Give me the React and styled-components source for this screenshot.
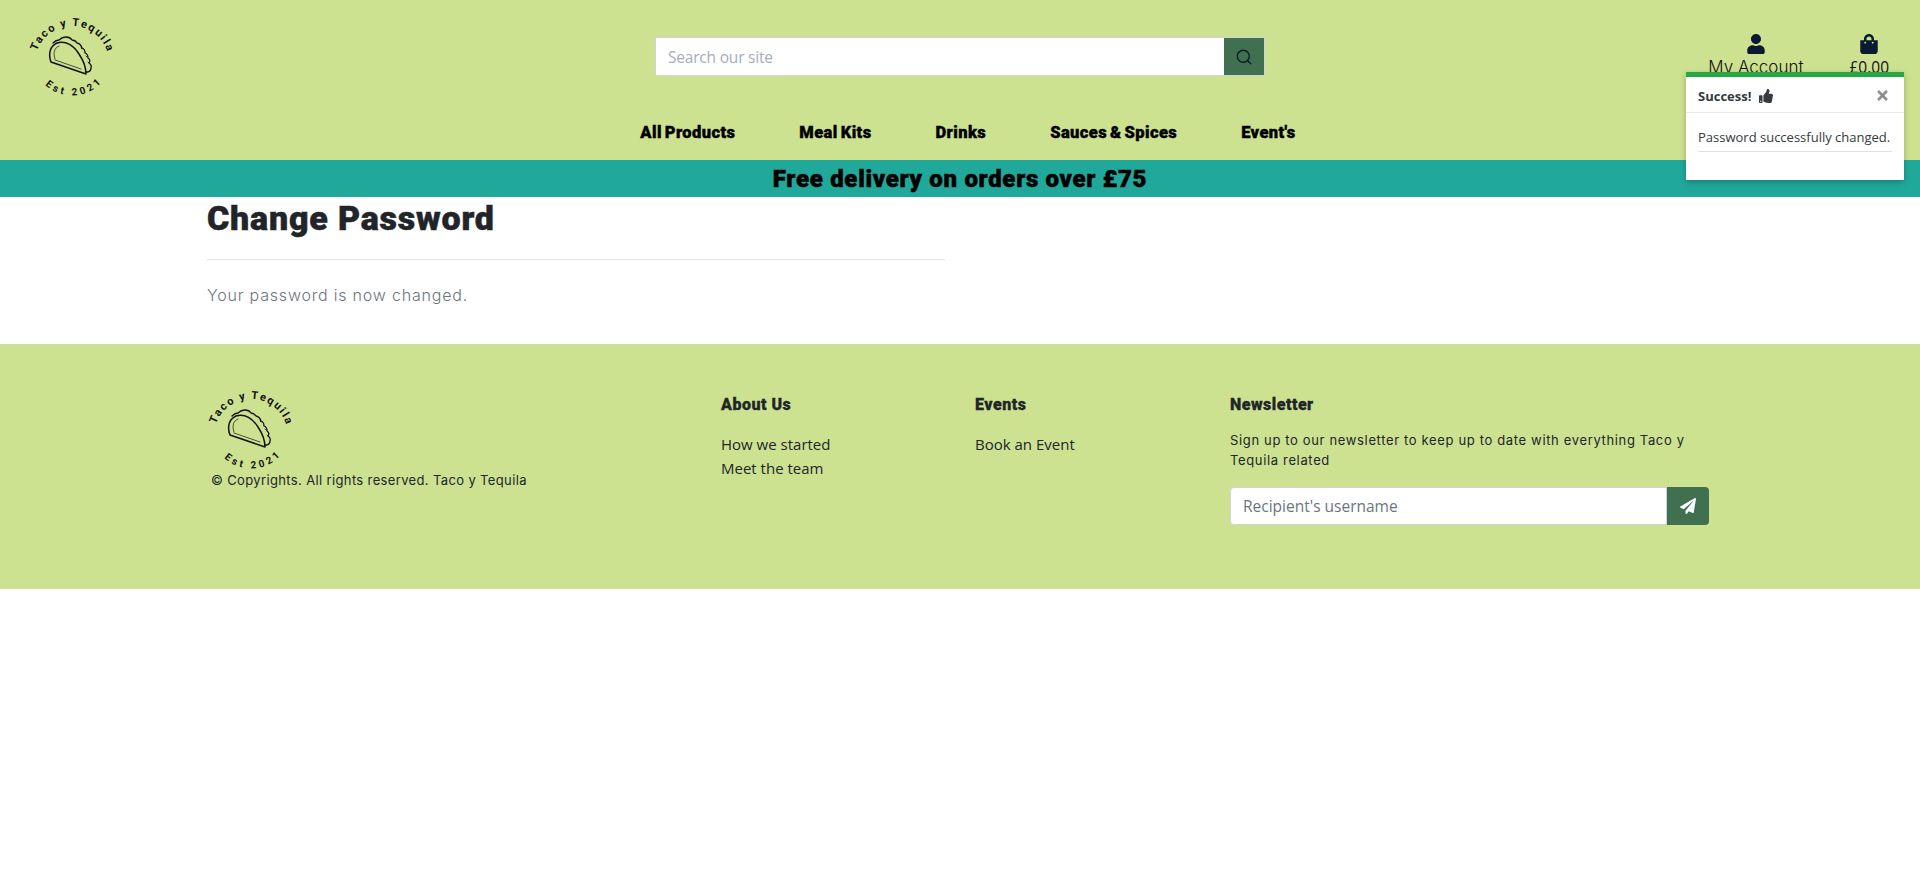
import React from 'react';
import styled, { createGlobalStyle } from 'styled-components';
import { FaUser, FaShoppingBag, FaThumbsUp, FaPaperPlane, FaTimes } from 'react-icons/fa';
import { Search } from 'lucide-react';

const GlobalStyle = createGlobalStyle`
  html, body { margin: 0; padding: 0; background: #fff; }
  body { font-family: "Open Sans", "Liberation Sans", sans-serif; color: #212529; }
  * { box-sizing: border-box; }
`;

const HEAVY = `"Roboto", "Lato", sans-serif`;
const ROUND = `"Inter", "Lato", sans-serif`;
const LIME = '#cde291';
const GREEN = '#40704f';

const Header = styled.header`
  position: relative;
  background: ${LIME};
  height: 160px;
`;

const TopRow = styled.div`
  display: grid;
  grid-template-columns: 1fr 610px 1fr;
  height: 112px;
  padding: 0 26px;
`;

const LogoCell = styled.div`
  padding-top: 8px;
`;

const SearchCell = styled.form`
  display: flex;
  height: 39px;
  margin-top: 37px;
  border: 1px solid #ced4da;
`;

const SearchInput = styled.input`
  flex: 1;
  border: 0;
  outline: 0;
  padding: 0 12px;
  font: 15.5px "Open Sans", sans-serif;
  letter-spacing: -0.2px;
  color: #495057;
  &::placeholder { color: #a6adb8; }
`;

const SearchButton = styled.button`
  width: 40px;
  border: 0;
  padding: 0;
  background: ${GREEN};
  color: #0b1a2b;
  display: flex;
  align-items: center;
  justify-content: center;
`;

const AccountCell = styled.div`
  display: flex;
  justify-content: flex-end;
  gap: 46px;
  padding: 34px 5px 0 0;
`;

const AccountLink = styled.a`
  display: flex;
  flex-direction: column;
  align-items: center;
  color: #111;
  font: ${(p) => (p.$price ? `400 15.5px/24px "Open Sans"` : `300 17px/24px ${ROUND}`)}, sans-serif;
  svg { color: #0b1a33; font-size: 20px; margin-bottom: 1px; }
`;

const Nav = styled.nav`
  display: flex;
  justify-content: center;
  gap: 64px;
  height: 48px;
  padding: 9px 0 0 16px;
`;

const NavItem = styled.a`
  color: #000;
  font: 900 16.5px/24px ${HEAVY};
  -webkit-text-stroke: 0.4px #000;
  letter-spacing: 0.4px;
  word-spacing: -1.5px;
`;

const Banner = styled.div`
  background: #20a89a;
  height: 37px;
  overflow: hidden;
  text-align: center;
  color: #000;
  font: 900 24px/39px ${HEAVY};
  -webkit-text-stroke: 0.5px #000;
  letter-spacing: 0.7px;
`;

const Toast = styled.div`
  position: absolute;
  top: 72px;
  right: 16px;
  width: 218px;
  height: 108px;
  background: #fff;
  border-top: 5px solid #28a745;
  box-shadow: 0 2px 6px rgba(0, 0, 0, 0.25);
  z-index: 5;
`;

const ToastHead = styled.div`
  display: flex;
  align-items: center;
  height: 36px;
  padding: 2px 12px 0;
  border-bottom: 1px solid #e9ecef;
  color: #343a40;
  font: 700 13px "Open Sans", sans-serif;
`;

const ThumbIcon = styled(FaThumbsUp)`
  margin-left: 8px;
  font-size: 14px;
`;

const CloseIcon = styled(FaTimes)`
  margin-left: auto;
  margin-right: 2px;
  color: #8f8f8f;
  font-size: 15px;
`;

const ToastBody = styled.div`
  margin: 0 12px;
  padding-top: 15px;
  height: 39px;
  border-bottom: 1px solid #dee2e6;
  color: #343a40;
  font: 400 13px/18px "Open Sans", sans-serif;
  white-space: nowrap;
`;

const Main = styled.main`
  width: 1506px;
  margin: 0 auto;
  height: 147px;
`;

const PageColumn = styled.div`
  width: 738px;
`;

const Title = styled.h1`
  margin: 0;
  height: 63px;
  padding-top: 1px;
  border-bottom: 1px solid #e1e3e5;
  font: 900 34px/40px ${HEAVY};
  -webkit-text-stroke: 0.5px #212529;
  letter-spacing: 0.8px;
  color: #212529;
`;

const Lead = styled.p`
  margin: 0;
  padding-top: 23px;
  color: #6c757d;
  font: 300 16px/24px ${ROUND};
  letter-spacing: 0.8px;
`;

const Footer = styled.footer`
  background: ${LIME};
  height: 245px;
`;

const FooterGrid = styled.div`
  width: 1506px;
  margin: 0 auto;
  padding-top: 50px;
  display: grid;
  grid-template-columns: 514px 254px 255px 483px;
`;

const Brand = styled.div`
  margin: -13px 0 0 -2px;
`;

const Copyright = styled.p`
  margin: -1px 0 0 6px;
  color: #212529;
  font: 400 13px/20px ${ROUND};
  letter-spacing: 0.36px;
`;

const ColTitle = styled.h5`
  margin: 1px 0 17px;
  color: #212529;
  font: 900 16px/20px ${HEAVY};
  -webkit-text-stroke: 0.3px #212529;
  letter-spacing: 0.5px;
`;

const FootLink = styled.a`
  display: block;
  color: #212529;
  font: 400 15px/24px "Open Sans", sans-serif;
`;

const NewsText = styled.p`
  margin: -2px 0 17px;
  width: 472px;
  color: #212529;
  font: 400 13px/20px ${ROUND};
  letter-spacing: 0.65px;
`;

const NewsForm = styled.form`
  display: flex;
  width: 479px;
  height: 38px;
`;

const NewsInput = styled.input`
  flex: 1;
  min-width: 0;
  padding: 0 12px;
  border: 1px solid #ced4da;
  border-radius: 4px 0 0 4px;
  outline: 0;
  font: 15.5px "Open Sans", sans-serif;
  &::placeholder { color: #6c757d; }
`;

const NewsButton = styled.button`
  width: 42px;
  border: 0;
  padding: 0;
  border-radius: 0 4px 4px 0;
  background: ${GREEN};
  color: #fff;
  display: flex;
  align-items: center;
  justify-content: center;
  font-size: 16px;
`;

const LogoSvg = styled.svg`
  display: block;
  overflow: visible;
`;

const LogoText = styled.text`
  font-family: "Roboto", sans-serif;
  font-weight: 700;
  fill: #111;
`;

// round stamp logo, a taco with text on two arcs
const Logo = ({ id }) => (
  <LogoSvg width="90" height="90" viewBox="0 0 90 90" fill="none">
    <defs>
      <path id={`${id}-top`} d="M11 43 A37 37 0 0 1 81 43" />
      <path id={`${id}-bot`} d="M19 77 A40 40 0 0 0 76 74" />
    </defs>
    <LogoText fontSize="11">
      <textPath href={`#${id}-top`} textLength="92" lengthAdjust="spacing">Taco y Tequila</textPath>
    </LogoText>
    <LogoText fontSize="10">
      <textPath href={`#${id}-bot`} textLength="62" lengthAdjust="spacing">Est  2021</textPath>
    </LogoText>
    <g stroke="#111" strokeLinecap="round" strokeLinejoin="round">
      <path strokeWidth="1.3" d="M27 35 q3 -3 6 -3 q3 -3 7 -3 q4 0 6 3 q3 0 5 3 q4 1 5 5 q3 1 3 5 q3 1 3 5 q3 2 1 5 q3 2 2 5 q0 3 -3 4 l-2 0" />
      <path strokeWidth="1.5" d="M25 54 C22 46 24 38 31 35 C40 32 48 38 53 46 C57 52 60 60 60 66 Z" />
      <path strokeWidth="0.7" d="M29 51 C27 45 28 40 33 38 M29 52 L55 61" />
      <path strokeWidth="0.8" d="M55 40 l1 1 M60 48 l1 1 M62 54 l1 1" />
    </g>
  </LogoSvg>
);

const App = () => (
  <>
    <GlobalStyle />
    <Header>
      <TopRow>
        <LogoCell><Logo id="head" /></LogoCell>
        <SearchCell>
          <SearchInput placeholder="Search our site" />
          <SearchButton type="button"><Search size={18} strokeWidth={1.8} /></SearchButton>
        </SearchCell>
        <AccountCell>
          <AccountLink><FaUser />My Account</AccountLink>
          <AccountLink $price><FaShoppingBag />£0.00</AccountLink>
        </AccountCell>
      </TopRow>
      <Nav>
        <NavItem>All Products</NavItem>
        <NavItem>Meal Kits</NavItem>
        <NavItem>Drinks</NavItem>
        <NavItem>Sauces &amp; Spices</NavItem>
        <NavItem>Event's</NavItem>
      </Nav>
      <Toast>
        <ToastHead>Success! <ThumbIcon /><CloseIcon /></ToastHead>
        <ToastBody>Password successfully changed.</ToastBody>
      </Toast>
    </Header>
    <Banner>Free delivery on orders over £75</Banner>
    <Main>
      <PageColumn>
        <Title>Change Password</Title>
        <Lead>Your password is now changed.</Lead>
      </PageColumn>
    </Main>
    <Footer>
      <FooterGrid>
        <Brand>
          <Logo id="foot" />
          <Copyright>© Copyrights. All rights reserved. Taco y Tequila</Copyright>
        </Brand>
        <div>
          <ColTitle>About Us</ColTitle>
          <FootLink>How we started</FootLink>
          <FootLink>Meet the team</FootLink>
        </div>
        <div>
          <ColTitle>Events</ColTitle>
          <FootLink>Book an Event</FootLink>
        </div>
        <div>
          <ColTitle>Newsletter</ColTitle>
          <NewsText>Sign up to our newsletter to keep up to date with everything Taco y Tequila related</NewsText>
          <NewsForm>
            <NewsInput placeholder="Recipient's username" />
            <NewsButton type="button"><FaPaperPlane /></NewsButton>
          </NewsForm>
        </div>
      </FooterGrid>
    </Footer>
  </>
);

export default App;
